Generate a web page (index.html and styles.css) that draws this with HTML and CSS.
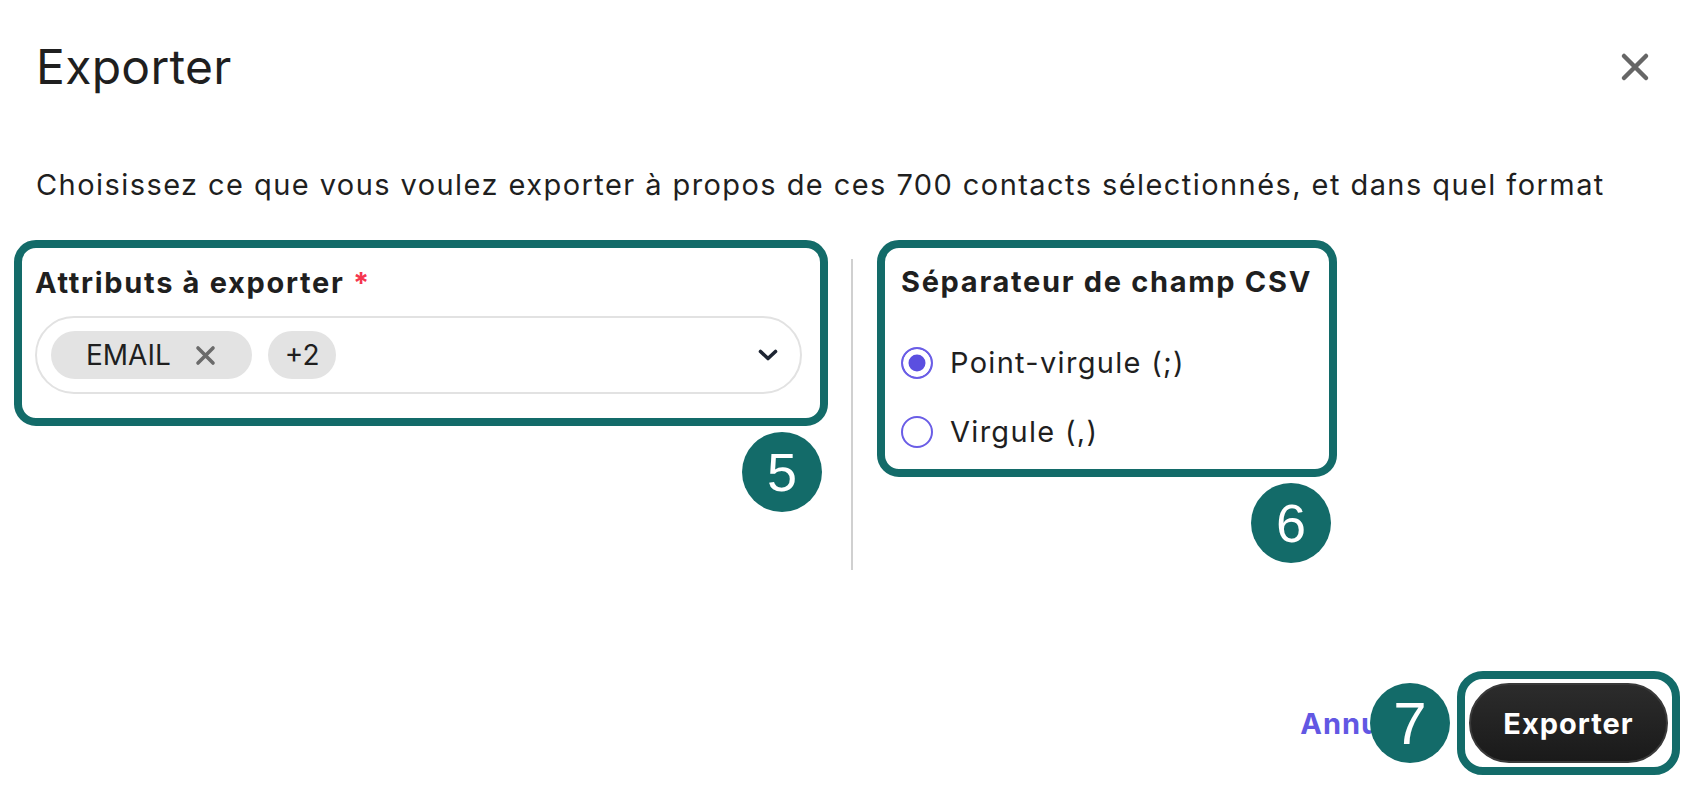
FILE: index.html
```html
<!DOCTYPE html>
<html lang="fr">
<head>
<meta charset="utf-8">
<title>Exporter</title>
<link rel="stylesheet" href="styles.css">
</head>
<body>
<div class="modal">
  <header class="modal-header">
    <h1 class="modal-title">Exporter</h1>
    <button class="close-btn" aria-label="Fermer">
      <svg width="30" height="30" viewBox="0 0 30 30"><path d="M4 4 L26 26 M26 4 L4 26" stroke="#666666" stroke-width="4.5" stroke-linecap="round" fill="none"/></svg>
    </button>
  </header>
  <p class="modal-desc">Choisissez ce que vous voulez exporter à propos de ces 700 contacts sélectionnés, et dans quel format</p>
  <div class="modal-body">
    <div class="annot annot-attrs">
      <label class="field-label">Attributs à exporter <span class="req">*</span></label>
      <div class="select">
        <span class="chip chip-email">EMAIL<svg class="chip-x" width="21" height="21" viewBox="0 0 21 21"><path d="M3 3 L18 18 M18 3 L3 18" stroke="#6b6b6b" stroke-width="3.6" stroke-linecap="round" fill="none"/></svg></span>
        <span class="chip chip-more">+2</span>
        <svg class="chevron" width="20" height="12" viewBox="0 0 20 12"><path d="M2.5 2.5 L10 9.5 L17.5 2.5" stroke="#1e2533" stroke-width="3.6" stroke-linecap="round" stroke-linejoin="round" fill="none"/></svg>
      </div>
      <span class="badge">5</span>
    </div>
    <div class="divider"></div>
    <div class="annot annot-sep">
      <div class="field-label">Séparateur de champ CSV</div>
      <label class="radio-row first"><span class="radio checked"></span>Point-virgule (;)</label>
      <label class="radio-row"><span class="radio"></span>Virgule (,)</label>
      <span class="badge">6</span>
    </div>
  </div>
  <footer class="modal-footer">
    <button class="btn-link">Annuler</button>
    <div class="annot annot-btn">
      <button class="btn-primary">Exporter</button>
      <span class="badge badge-left">7</span>
    </div>
  </footer>
</div>
</body>
</html>
```

FILE: styles.css
```css
* { box-sizing: border-box; }

body {
  margin: 0;
  background: #ffffff;
  font-family: Inter, "Noto Sans", sans-serif;
  color: #1f1f1f;
}

.modal {
  padding: 38px 26px 0 36px;
}

.modal-header {
  display: flex;
  justify-content: space-between;
  align-items: center;
  height: 58px;
}

.modal-title {
  margin: 0;
  font-size: 48px;
  font-weight: 400;
  line-height: 58px;
  letter-spacing: 0.3px;
}

.close-btn {
  border: 0;
  background: none;
  padding: 0;
  margin-right: 30px;
  width: 30px;
  height: 30px;
  display: flex;
}

.modal-desc {
  margin: 69px 0 0;
  font-size: 29px;
  line-height: 40px;
  letter-spacing: 1.43px;
}

.modal-body {
  display: flex;
  align-items: flex-start;
  margin-top: 35px;
}

.annot {
  position: relative;
  border: 8px solid #136b69;
  border-radius: 22px;
  background: #ffffff;
}

.annot-attrs {
  margin-left: -22px;
  width: 814px;
  padding: 15px 18px 24px 13px;
}

.field-label {
  display: block;
  font-size: 29px;
  font-weight: 700;
  line-height: 40px;
  letter-spacing: 1.68px;
}

.req {
  color: #f5364f;
}

.select {
  margin-top: 13px;
  height: 78px;
  border: 2px solid #e2e2e2;
  border-radius: 39px;
  display: flex;
  align-items: center;
  gap: 16px;
  padding: 0 22px 0 14px;
}

.chip {
  display: inline-flex;
  align-items: center;
  height: 48px;
  border-radius: 24px;
  background: #e3e3e3;
  font-size: 28px;
  color: #1f1f1f;
}

.chip-email {
  padding: 0 36px 0 35px;
}

.chip-x {
  margin-left: 24px;
}

.chip-more {
  padding: 0 17px;
}

.chevron {
  margin-left: auto;
}

.divider {
  width: 2px;
  height: 311px;
  background: #d0d0d0;
  margin: 19px 24px 0 23px;
}

.annot-sep {
  padding: 14px 17px 17px 16px;
}

.radio-row {
  display: flex;
  align-items: center;
  gap: 17px;
  height: 40px;
  font-size: 29px;
  line-height: 40px;
  letter-spacing: 1.3px;
  margin-top: 29px;
}

.radio-row.first {
  margin-top: 41px;
}

.radio {
  width: 32px;
  height: 32px;
  border-radius: 50%;
  border: 2.5px solid #6a5de6;
  flex: none;
}

.radio.checked {
  background: #5b4fe0;
  box-shadow: inset 0 0 0 5.5px #ffffff;
}

.badge {
  position: absolute;
  top: calc(100% + 14px);
  right: -2px;
  width: 80px;
  height: 80px;
  border-radius: 50%;
  background: #136b69;
  color: #ffffff;
  font-family: "Liberation Sans", Arial, sans-serif;
  font-size: 54px;
  letter-spacing: 0;
  display: flex;
  align-items: center;
  justify-content: center;
}

.modal-footer {
  display: flex;
  justify-content: flex-end;
  align-items: center;
  margin-top: 101px;
}

.btn-link {
  border: 0;
  background: none;
  padding: 0;
  margin-right: 37px;
  font-family: Inter, "Noto Sans", sans-serif;
  font-size: 29px;
  font-weight: 700;
  letter-spacing: 1px;
  color: #6257e3;
}

.annot-btn {
  padding: 4px;
  border-radius: 26px;
}

.btn-primary {
  display: block;
  width: 199px;
  height: 80px;
  border-radius: 40px;
  border: 2px solid #3a3a3a;
  background: linear-gradient(#2c2c2c, #1a1a1a);
  color: #ffffff;
  font-family: Inter, "Noto Sans", sans-serif;
  font-size: 29px;
  font-weight: 700;
  letter-spacing: 1px;
}

.badge.badge-left {
  top: 50%;
  right: calc(100% + 15px);
  transform: translateY(-50%);
  font-size: 60px;
}
```
